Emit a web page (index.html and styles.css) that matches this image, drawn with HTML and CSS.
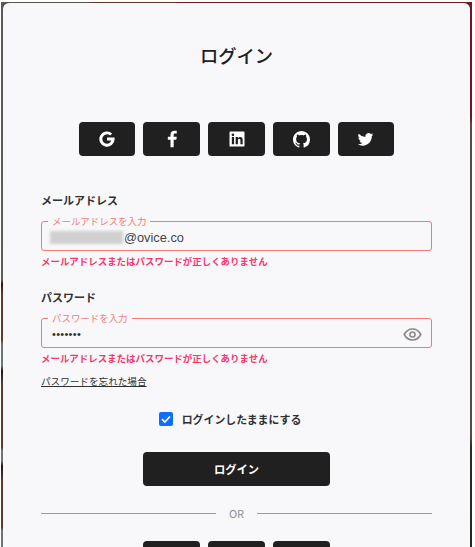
FILE: index.html
```html
<!DOCTYPE html>
<html lang="ja">
<head>
<meta charset="utf-8">
<title>ログイン</title>
<link rel="stylesheet" href="styles.css">
</head>
<body>
<div class="stage">
<main class="card">
  <h1 class="title">ログイン</h1>
  <div class="socials">
    <button class="social"><svg class="ico ico-lg" viewBox="0 0 24 24"><path d="M21 10.300H12v3.400h5c-.6 2.400-2.600 3.900-5 3.900a5.600 5.600 0 1 1 3.700-9.800l2.500-2.500A9.200 9.200 0 1 0 21.200 12c0-.6-.1-1.200-.2-1.700z" fill="#fff"/></svg></button>
    <button class="social"><svg class="ico ico-lg" viewBox="0 0 24 24"><path d="M14 22v-9h3.200l.5-3.600H14V7.200c0-1 .3-1.700 1.800-1.700h1.900V2.200C17.400 2.100 16.200 2 14.900 2 12.100 2 10.200 3.700 10.200 6.800v2.600H7V13h3.200v9z" fill="#fff"/></svg></button>
    <button class="social"><svg class="ico ico-lg" viewBox="0 0 24 24"><path fill-rule="evenodd" d="M4 3h16a1 1 0 0 1 1 1v16a1 1 0 0 1-1 1H4a1 1 0 0 1-1-1V4a1 1 0 0 1 1-1zm1.800 6.700v8.600h2.700V9.700zM7.100 5.400a1.600 1.600 0 1 0 0 3.200 1.600 1.600 0 0 0 0-3.200zm3.300 4.300v8.600h2.700v-4.500c0-1.200.4-2.100 1.600-2.100s1.400 1 1.400 2.200v4.400h2.700v-5c0-2.500-.9-3.800-3-3.800-1.300 0-2.200.7-2.700 1.500V9.700z" fill="#fff"/></svg></button>
    <button class="social"><svg class="ico" viewBox="0 0 16 16"><path d="M8 0C3.580 0 0 3.580 0 8c0 3.540 2.290 6.530 5.470 7.590.4.070.55-.17.55-.38 0-.19-.01-.82-.01-1.490-2.010.37-2.530-.49-2.690-.94-.09-.23-.48-.94-.82-1.130-.28-.15-.68-.52-.01-.53.63-.01 1.080.58 1.230.82.720 1.210 1.870.87 2.330.66.070-.52.280-.87.510-1.070-1.780-.2-3.640-.89-3.640-3.950 0-.87.310-1.590.820-2.150-.08-.2-.36-1.020.08-2.120 0 0 .67-.21 2.200.82.640-.18 1.320-.27 2-.27s1.360.09 2 .27c1.530-1.040 2.200-.82 2.200-.82.440 1.100.160 1.920.080 2.120.510.560.820 1.270.820 2.150 0 3.070-1.870 3.750-3.650 3.950.290.250.540.730.540 1.480 0 1.070-.01 1.930-.01 2.200 0 .210.150.460.550.380A8 8 0 0 0 16 8c0-4.420-3.580-8-8-8z" fill="#fff"/></svg></button>
    <button class="social"><svg class="ico" viewBox="0 0 24 24"><path d="M23 5.100c-.8.400-1.700.600-2.600.700a4.500 4.500 0 0 0 2-2.500c-.9.500-1.900.900-2.900 1.100a4.500 4.500 0 0 0-7.700 4.100A12.800 12.800 0 0 1 2.500 3.800a4.500 4.500 0 0 0 1.400 6c-.7 0-1.400-.2-2-.6v.1c0 2.200 1.500 4 3.600 4.400-.7.200-1.400.2-2 .1a4.500 4.500 0 0 0 4.200 3.100A9 9 0 0 1 1 18.800 12.800 12.800 0 0 0 8 20.800c8.300 0 12.900-6.900 12.900-12.900v-.6c.8-.6 1.600-1.300 2.100-2.200z" fill="#fff"/></svg></button>
  </div>

  <section class="field">
    <div class="field-label">メールアドレス</div>
    <fieldset class="box">
      <legend class="legend">メールアドレスを入力</legend>
      <div class="value"><span class="blur"></span><span class="typed">@ovice.co</span></div>
    </fieldset>
    <p class="error">メールアドレスまたはパスワードが正しくありません</p>
  </section>

  <section class="field field-password">
    <div class="field-label">パスワード</div>
    <fieldset class="box">
      <legend class="legend">パスワードを入力</legend>
      <div class="value value-password">
        <span class="dots">•••••••</span>
        <svg class="eye" viewBox="0 0 24 24"><path d="M1.500 12C4 7.500 8 5 12 5s8 2.500 10.500 7C20 16.500 16 19 12 19s-8-2.500-10.500-7z" fill="none" stroke="#8a8a8a" stroke-width="2"/><circle cx="12" cy="12" r="3.200" fill="none" stroke="#8a8a8a" stroke-width="2"/></svg>
      </div>
    </fieldset>
    <p class="error">メールアドレスまたはパスワードが正しくありません</p>
  </section>

  <a class="forgot" href="#">パスワードを忘れた場合</a>

  <label class="remember">
    <span class="check"><svg viewBox="0 0 14 14"><path d="M3 7.200l2.800 2.800L11 4.500" fill="none" stroke="#fff" stroke-width="1.700"/></svg></span>
    <span>ログインしたままにする</span>
  </label>

  <button class="submit">ログイン</button>

  <div class="or"><span class="or-line"></span><span class="or-text">OR</span><span class="or-line"></span></div>

  <div class="socials socials-low">
    <button class="social"></button>
    <button class="social"></button>
    <button class="social"></button>
  </div>
</main>
</div>
</body>
</html>
```
FILE: styles.css
```css
* { box-sizing: border-box; }
html, body { height: 100%; }
body {
  margin: 0;
  width: 475px;
  height: 547px;
  overflow: hidden;
  padding: 2px 3px 0 1px;
  background: #fff;
  font-family: "Noto Sans CJK JP", "Noto Sans", sans-serif;
  color: #202020;
}
.stage {
  width: 471px;
  height: 545px;
  padding: 1px 2px 0 2px;
  overflow: hidden;
  background:
    linear-gradient(180deg, #5a5a56 0, #5c5c58 278px, #2e1512 282px, #5e3c34 292px, #5e3c34 338px, #6c7474 342px, #6c7474 364px, #2a1210 369px, #5e3c34 382px, #5e3c34 445px, #6c7474 449px, #6c7474 459px, #2a1210 464px, #5e3c34 480px, #5e3c34 525px, #6c7474 529px) left top / 2px 100% no-repeat,
    linear-gradient(180deg, #6a1a20 0, #6a1a20 116px, #5c4a40 122px, #5c4a40 436px, #22302a 444px, #1c2a24 100%) right top / 2px 100% no-repeat,
    linear-gradient(90deg, #55554f 0, #55554f 86px, #5a3a30 92px, #5a3a30 172px, #6c1a20 178px, #6c1a20 100%);
}
.card {
  width: 467px;
  background: #f8f8fb;
  border-radius: 6px 6px 0 0;
  padding: 39px 38px 0 38px;
  display: flex;
  flex-direction: column;
}
.title {
  margin: 0;
  text-align: center;
  font-size: 18.300px;
  line-height: 26px;
  font-weight: 500;
  color: #202020;
}
.socials { display: flex; justify-content: center; gap: 8px; margin-top: 54px; }
.social {
  width: 56.700px;
  height: 34px;
  padding: 0;
  border: 0;
  border-radius: 4px;
  background: #202020;
  display: flex;
  align-items: center;
  justify-content: center;
}
.ico { width: 17px; height: 17px; }
.ico-lg { width: 20px; height: 20px; }
.field { margin-top: 36px; }
.field-password { margin-top: 21px; }
.field-label { font-size: 11px; line-height: 16px; font-weight: 700; color: #303030; }
.box {
  margin: 7px 0 0;
  padding: 0 9px 0 6px;
  width: 391px;
  height: 36px;
  border: 1px solid #f07a78;
  border-radius: 3px;
  min-inline-size: 0;
}
.legend {
  padding: 0 4px;
  font-size: 9.450px;
  line-height: 12px;
  color: #f07c7a;
  font-weight: 400;
}
.value { display: flex; align-items: center; height: 20px; }
.value-password { justify-content: space-between; }
.blur { width: 73px; height: 13px; margin: 0 1px 0 2px; background: #d0d0d0; filter: blur(1.500px); }
.typed { font-family: "Liberation Sans", sans-serif; font-size: 12.800px; color: #444; }
.dots { font-family: "Liberation Sans", sans-serif; font-size: 11px; letter-spacing: .3px; color: #303030; padding-left: 4px; }
.eye { width: 19px; height: 19px; }
.error { margin: 3px 0 0; font-size: 9.460px; line-height: 14px; font-weight: 700; color: #f5386c; }
.forgot { margin-top: 9px; align-self: flex-start; font-size: 9.600px; line-height: 14px; color: #303030; text-decoration: underline; }
.remember { margin-top: 23px; padding-right: 13px; display: flex; justify-content: center; align-items: center; gap: 9px; font-size: 10.900px; line-height: 16px; font-weight: 700; color: #303030; }
.check { width: 14px; height: 14px; border-radius: 2px; background: #0d6efd; display: flex; }
.submit {
  margin: 25px auto 0;
  width: 187px;
  height: 34px;
  flex-shrink: 0;
  border: 0;
  border-radius: 4px;
  background: #202020;
  color: #fff;
  font: 700 11.300px/16px "Noto Sans CJK JP", sans-serif;
}
.or { margin-top: 19px; display: flex; align-items: center; gap: 12px; height: 16px; }
.or-line { flex: 1; height: 1px; background: #9a9a9a; }
.or-text { font-size: 11px; color: #8f8f8f; line-height: 16px; width: 17px; text-align: center; }
.socials-low { margin-top: 20px; }
```
